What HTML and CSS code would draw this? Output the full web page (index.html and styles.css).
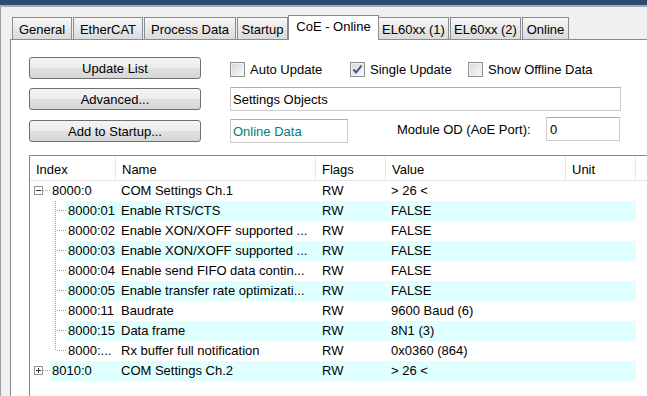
FILE: index.html
```html
<!DOCTYPE html>
<html lang="en">
<head>
    <meta charset="UTF-8">
    <title>CoE - Online</title>
    <link rel="stylesheet" href="styles.css">
</head>
<body>
    <div class="titlebar"></div>
    <div class="window">
        <div class="tabs">
            <div class="tab tab-general">General</div>
            <div class="tab tab-ethercat">EtherCAT</div>
            <div class="tab tab-process">Process Data</div>
            <div class="tab tab-startup">Startup</div>
            <div class="tab tab-coe active">CoE - Online</div>
            <div class="tab tab-el1">EL60xx (1)</div>
            <div class="tab tab-el2">EL60xx (2)</div>
            <div class="tab tab-online">Online</div>
        </div>

        <div class="panel">
            <div class="controls">
                <div class="ctl-row">
                    <button class="btn">Update List</button>
                    <div class="checks">
                        <label class="check check-auto"><span class="box"></span>Auto Update</label>
                        <label class="check check-single">
                            <span class="box">
                                <svg width="13" height="13" viewBox="0 0 13 13"><path d="M2.5 6.5l2.6 3L10.5 2.5" fill="none" stroke="#3d5688" stroke-width="2"/></svg>
                            </span>Single Update</label>
                        <label class="check"><span class="box"></span>Show Offline Data</label>
                    </div>
                </div>
                <div class="ctl-row">
                    <button class="btn">Advanced...</button>
                    <div class="field objects">Settings Objects</div>
                </div>
                <div class="ctl-row third">
                    <button class="btn">Add to Startup...</button>
                    <div class="field online">Online Data</div>
                    <div class="port">
                        <span class="port-label">Module OD (AoE Port):</span>
                        <div class="field port-box">0</div>
                    </div>
                </div>
            </div>

            <div class="list">
                <div class="lv-row lv-head">
                    <div>Index</div>
                    <div>Name</div>
                    <div>Flags</div>
                    <div>Value</div>
                    <div>Unit</div>
                    <div></div>
                </div>

                <div class="lv-row">
                    <div class="idx">
                        <svg width="20" height="20" viewBox="0 0 20 20"><rect x="4.5" y="5.5" width="8" height="8" fill="#fff" stroke="#919191"/><path d="M6 9.5h5" stroke="#333"/><path d="M13 9.5h7" stroke="#a0a0a0" stroke-dasharray="1 1"/></svg>
                        <span class="key">8000:0</span>
                    </div>
                    <div class="cell">COM Settings Ch.1</div>
                    <div class="cell flags">RW</div>
                    <div class="cell">&gt; 26 &lt;</div>
                    <div class="cell"></div>
                    <div></div>
                </div>
                <div class="lv-row hl">
                    <div class="idx">
                        <svg width="36" height="20" viewBox="0 0 36 20"><path d="M25.5 0v20M27 9.5h9" stroke="#a0a0a0" stroke-dasharray="1 1"/></svg>
                        <span class="key">8000:01</span>
                    </div>
                    <div class="cell">Enable RTS/CTS</div>
                    <div class="cell flags">RW</div>
                    <div class="cell">FALSE</div>
                    <div class="cell"></div>
                    <div></div>
                </div>
                <div class="lv-row">
                    <div class="idx">
                        <svg width="36" height="20" viewBox="0 0 36 20"><path d="M25.5 0v20M27 9.5h9" stroke="#a0a0a0" stroke-dasharray="1 1"/></svg>
                        <span class="key">8000:02</span>
                    </div>
                    <div class="cell">Enable XON/XOFF supported ...</div>
                    <div class="cell flags">RW</div>
                    <div class="cell">FALSE</div>
                    <div class="cell"></div>
                    <div></div>
                </div>
                <div class="lv-row hl">
                    <div class="idx">
                        <svg width="36" height="20" viewBox="0 0 36 20"><path d="M25.5 0v20M27 9.5h9" stroke="#a0a0a0" stroke-dasharray="1 1"/></svg>
                        <span class="key">8000:03</span>
                    </div>
                    <div class="cell">Enable XON/XOFF supported ...</div>
                    <div class="cell flags">RW</div>
                    <div class="cell">FALSE</div>
                    <div class="cell"></div>
                    <div></div>
                </div>
                <div class="lv-row">
                    <div class="idx">
                        <svg width="36" height="20" viewBox="0 0 36 20"><path d="M25.5 0v20M27 9.5h9" stroke="#a0a0a0" stroke-dasharray="1 1"/></svg>
                        <span class="key">8000:04</span>
                    </div>
                    <div class="cell">Enable send FIFO data contin...</div>
                    <div class="cell flags">RW</div>
                    <div class="cell">FALSE</div>
                    <div class="cell"></div>
                    <div></div>
                </div>
                <div class="lv-row hl">
                    <div class="idx">
                        <svg width="36" height="20" viewBox="0 0 36 20"><path d="M25.5 0v20M27 9.5h9" stroke="#a0a0a0" stroke-dasharray="1 1"/></svg>
                        <span class="key">8000:05</span>
                    </div>
                    <div class="cell">Enable transfer rate optimizati...</div>
                    <div class="cell flags">RW</div>
                    <div class="cell">FALSE</div>
                    <div class="cell"></div>
                    <div></div>
                </div>
                <div class="lv-row">
                    <div class="idx">
                        <svg width="36" height="20" viewBox="0 0 36 20"><path d="M25.5 0v20M27 9.5h9" stroke="#a0a0a0" stroke-dasharray="1 1"/></svg>
                        <span class="key">8000:11</span>
                    </div>
                    <div class="cell">Baudrate</div>
                    <div class="cell flags">RW</div>
                    <div class="cell">9600 Baud (6)</div>
                    <div class="cell"></div>
                    <div></div>
                </div>
                <div class="lv-row hl">
                    <div class="idx">
                        <svg width="36" height="20" viewBox="0 0 36 20"><path d="M25.5 0v20M27 9.5h9" stroke="#a0a0a0" stroke-dasharray="1 1"/></svg>
                        <span class="key">8000:15</span>
                    </div>
                    <div class="cell">Data frame</div>
                    <div class="cell flags">RW</div>
                    <div class="cell">8N1 (3)</div>
                    <div class="cell"></div>
                    <div></div>
                </div>
                <div class="lv-row">
                    <div class="idx">
                        <svg width="36" height="20" viewBox="0 0 36 20"><path d="M25.5 0v10M27 9.5h9" stroke="#a0a0a0" stroke-dasharray="1 1"/></svg>
                        <span class="key">8000:...</span>
                    </div>
                    <div class="cell">Rx buffer full notification</div>
                    <div class="cell flags">RW</div>
                    <div class="cell">0x0360 (864)</div>
                    <div class="cell"></div>
                    <div></div>
                </div>
                <div class="lv-row hl">
                    <div class="idx">
                        <svg width="20" height="20" viewBox="0 0 20 20"><rect x="4.5" y="5.5" width="8" height="8" fill="#fff" stroke="#919191"/><path d="M6 9.5h5M8.5 7v5" stroke="#333"/><path d="M13 9.5h7" stroke="#a0a0a0" stroke-dasharray="1 1"/></svg>
                        <span class="key">8010:0</span>
                    </div>
                    <div class="cell">COM Settings Ch.2</div>
                    <div class="cell flags">RW</div>
                    <div class="cell">&gt; 26 &lt;</div>
                    <div class="cell"></div>
                    <div></div>
                </div>
            </div>
        </div>
    </div>
</body>
</html>
```

FILE: styles.css
```css
* {
    box-sizing: border-box;
}
body {
    margin: 0;
    width: 647px;
    height: 396px;
    overflow: hidden;
    background-color: #f0f0f0;
    font-family: "Liberation Sans", Arial, sans-serif;
    font-size: 13px;
    color: #000;
}
.titlebar {
    height: 7px;
    background: #2f4b70;
    border-bottom: 2px solid #a3acb8;
}
.window {
    height: 389px;
    border-left: 1px solid #a0a0a0;
    padding-top: 8px;
    display: flex;
    flex-direction: column;
}

/* tab strip */
.tabs {
    display: flex;
    align-items: flex-end;
    padding-left: 11px;
}
.tab {
    height: 22px;
    margin-right: 1px;
    padding-top: 1px;
    border: 1px solid #898c95;
    border-bottom: none;
    background: linear-gradient(#f7f7f7, #dadada);
    display: flex;
    align-items: center;
    justify-content: center;
    white-space: nowrap;
}
.tab.active {
    height: 25px;
    margin: 0 -1px -1px -1px;
    padding-top: 0;
    padding-bottom: 3px;
    background: #fff;
    position: relative;
    z-index: 1;
}
.tab-general { width: 60px; }
.tab-ethercat { width: 70px; }
.tab-process { width: 92px; }
.tab-startup { width: 51px; }
.tab-coe { width: 91px; }
.tab-el1 { width: 71px; }
.tab-el2 { width: 71px; }
.tab-online { width: 47px; }

/* panel */
.panel {
    flex: 1;
    margin-left: 9px;
    padding: 17px 0 0 18px;
    background: #fff;
    border-top: 1px solid #898c95;
    border-left: 1px solid #898c95;
    display: flex;
    flex-direction: column;
    overflow: hidden;
}
.controls {
    display: flex;
    flex-direction: column;
    gap: 9px;
}
.ctl-row {
    display: flex;
    align-items: center;
    height: 22px;
    gap: 29px;
}
.ctl-row.third {
    margin-top: 1px;
}
.btn {
    width: 172px;
    height: 22px;
    padding: 0;
    border: 1px solid #707070;
    border-radius: 3px;
    background: linear-gradient(#f4f4f4, #ececec 50%, #e0e0e0 51%, #d6d6d6);
    font: inherit;
    color: #000;
}
.checks {
    display: flex;
    margin-top: 3px;
}
.check {
    display: flex;
    align-items: center;
    gap: 5px;
}
.check-auto { width: 120px; }
.check-single { width: 118px; }
.box {
    width: 15px;
    height: 15px;
    border: 1px solid #8e8f8f;
    background: linear-gradient(135deg, #d8d8d8, #f9f9f9);
    box-shadow: inset 0 0 0 1px #f2f2f2;
    display: flex;
    align-items: center;
    justify-content: center;
}
.box svg {
    display: block;
}
.field {
    height: 24px;
    padding-left: 2px;
    border: 1px solid #cacaca;
    border-top-color: #abadb3;
    background: #fff;
    display: flex;
    align-items: center;
}
.field.objects { width: 391px; }
.field.online {
    width: 118px;
    color: #008080;
}
.port {
    display: flex;
    align-items: center;
    align-self: flex-start;
    margin-top: -3px;
    margin-left: 20px;
}
.port-label { width: 149px; }
.field.port-box {
    width: 74px;
    padding-left: 3px;
}

/* list view */
.list {
    flex: 1;
    margin-top: 13px;
    border-top: 1px solid #828790;
    border-left: 1px solid #828790;
}
.lv-row {
    display: grid;
    grid-template-columns: 86px 200px 70px 180px 70px 1fr;
    height: 20px;
    line-height: 20px;
    white-space: nowrap;
}
.lv-head {
    height: 25px;
    border-bottom: 1px solid #e5e5e5;
}
.lv-head div {
    padding: 4px 0 0 6px;
    border-right: 1px solid #e5e5e5;
}
.lv-head div:last-child {
    border-right: none;
}
.cell {
    padding-left: 5px;
    overflow: hidden;
}
.cell.flags {
    padding-left: 6px;
}
.hl .cell,
.hl .key {
    background: #e0ffff;
}
.idx {
    display: flex;
}
.idx svg {
    display: block;
    flex: none;
}
.idx .key {
    flex: 1;
    padding-left: 2px;
}
```
